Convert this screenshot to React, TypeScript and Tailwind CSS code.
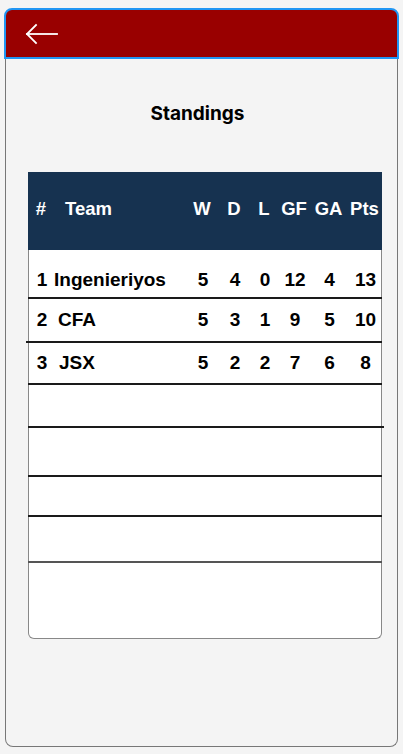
const teams = [
  { pos: 1, name: 'Ingenieriyos', w: 5, d: 4, l: 0, gf: 12, ga: 4, pts: 13, h: 'h-[47px] pt-[14px]', nameClass: '-ml-px' },
  { pos: 2, name: 'CFA', w: 5, d: 3, l: 1, gf: 9, ga: 5, pts: 10, h: 'h-[42.5px]', nameClass: 'pl-[3px]' },
  { pos: 3, name: 'JSX', w: 5, d: 2, l: 2, gf: 7, ga: 6, pts: 8, h: 'h-[40.5px]', nameClass: 'pl-[4px]' },
];

const cols = 'grid grid-cols-[26px_132px_32px_32px_28px_32px_37px_35px] items-center';

function BackArrow() {
  return (
    <svg width="34" height="22" viewBox="0 0 34 22" fill="none" stroke="white" strokeWidth="1.8" strokeLinecap="square">
      <path d="M2 11 H32" />
      <path d="M11 2 L2 11 L11 20" />
    </svg>
  );
}

function Line({ className = '' }: { className?: string }) {
  return <div className={`h-[1.5px] bg-[#1a1a1a] -mx-px ${className}`} />;
}

export default function App() {
  return (
    <div className="min-h-[754px] bg-[#f4f4f4] pt-[8px] font-['Liberation_Sans',Arial,sans-serif]">
      <div className="ml-[4px] w-[395px]">
        <div className="h-[51px] bg-[#990000] border-2 border-[#2196f3] rounded-t-lg flex items-center pl-[19px]">
          <BackArrow />
        </div>
        <div className="mx-px h-[688px] border border-t-0 border-[#777] rounded-b-lg">
          <h1 className="pt-[43px] pr-[8px] text-center text-[19px] leading-6 font-bold text-black font-['Inter',sans-serif]">
            Standings
          </h1>
          <div className="ml-[22px] mt-[46px] w-[354px] text-black">
            <div className={`${cols} h-[78px] pb-[5px] bg-[#163250] text-white text-[18.5px] font-bold`}>
              <div className="text-center">#</div>
              <div className="pl-[11px]">Team</div>
              <div className="text-center">W</div>
              <div className="text-center">D</div>
              <div className="text-center">L</div>
              <div className="text-center">GF</div>
              <div className="text-center">GA</div>
              <div className="text-center">Pts</div>
            </div>
            <div className="bg-white border-x border-b border-[#888] rounded-b-md">
              {teams.map((t, i) => (
                <div key={t.pos}>
                  {i === 1 && <Line />}
                  {i === 2 && <Line className="-ml-[3px]" />}
                  <div className={`${cols} ${t.h} text-[19px] font-bold`}>
                    <div className="text-center">{t.pos}</div>
                    <div className={t.nameClass}>{t.name}</div>
                    <div className="text-center">{t.w}</div>
                    <div className="text-center">{t.d}</div>
                    <div className="text-center">{t.l}</div>
                    <div className="text-center">{t.gf}</div>
                    <div className="text-center">{t.ga}</div>
                    <div className="text-center">{t.pts}</div>
                  </div>
                </div>
              ))}
              <Line />
              <div className="h-[41.5px]" />
              <Line className="-mr-[3px]" />
              <div className="h-[47.5px]" />
              <Line />
              <div className="h-[38.5px]" />
              <Line />
              <div className="h-[44.5px]" />
              <div className="h-[2px] bg-[#555] -mx-px" />
              <div className="h-[75px]" />
            </div>
          </div>
        </div>
      </div>
    </div>
  );
}
